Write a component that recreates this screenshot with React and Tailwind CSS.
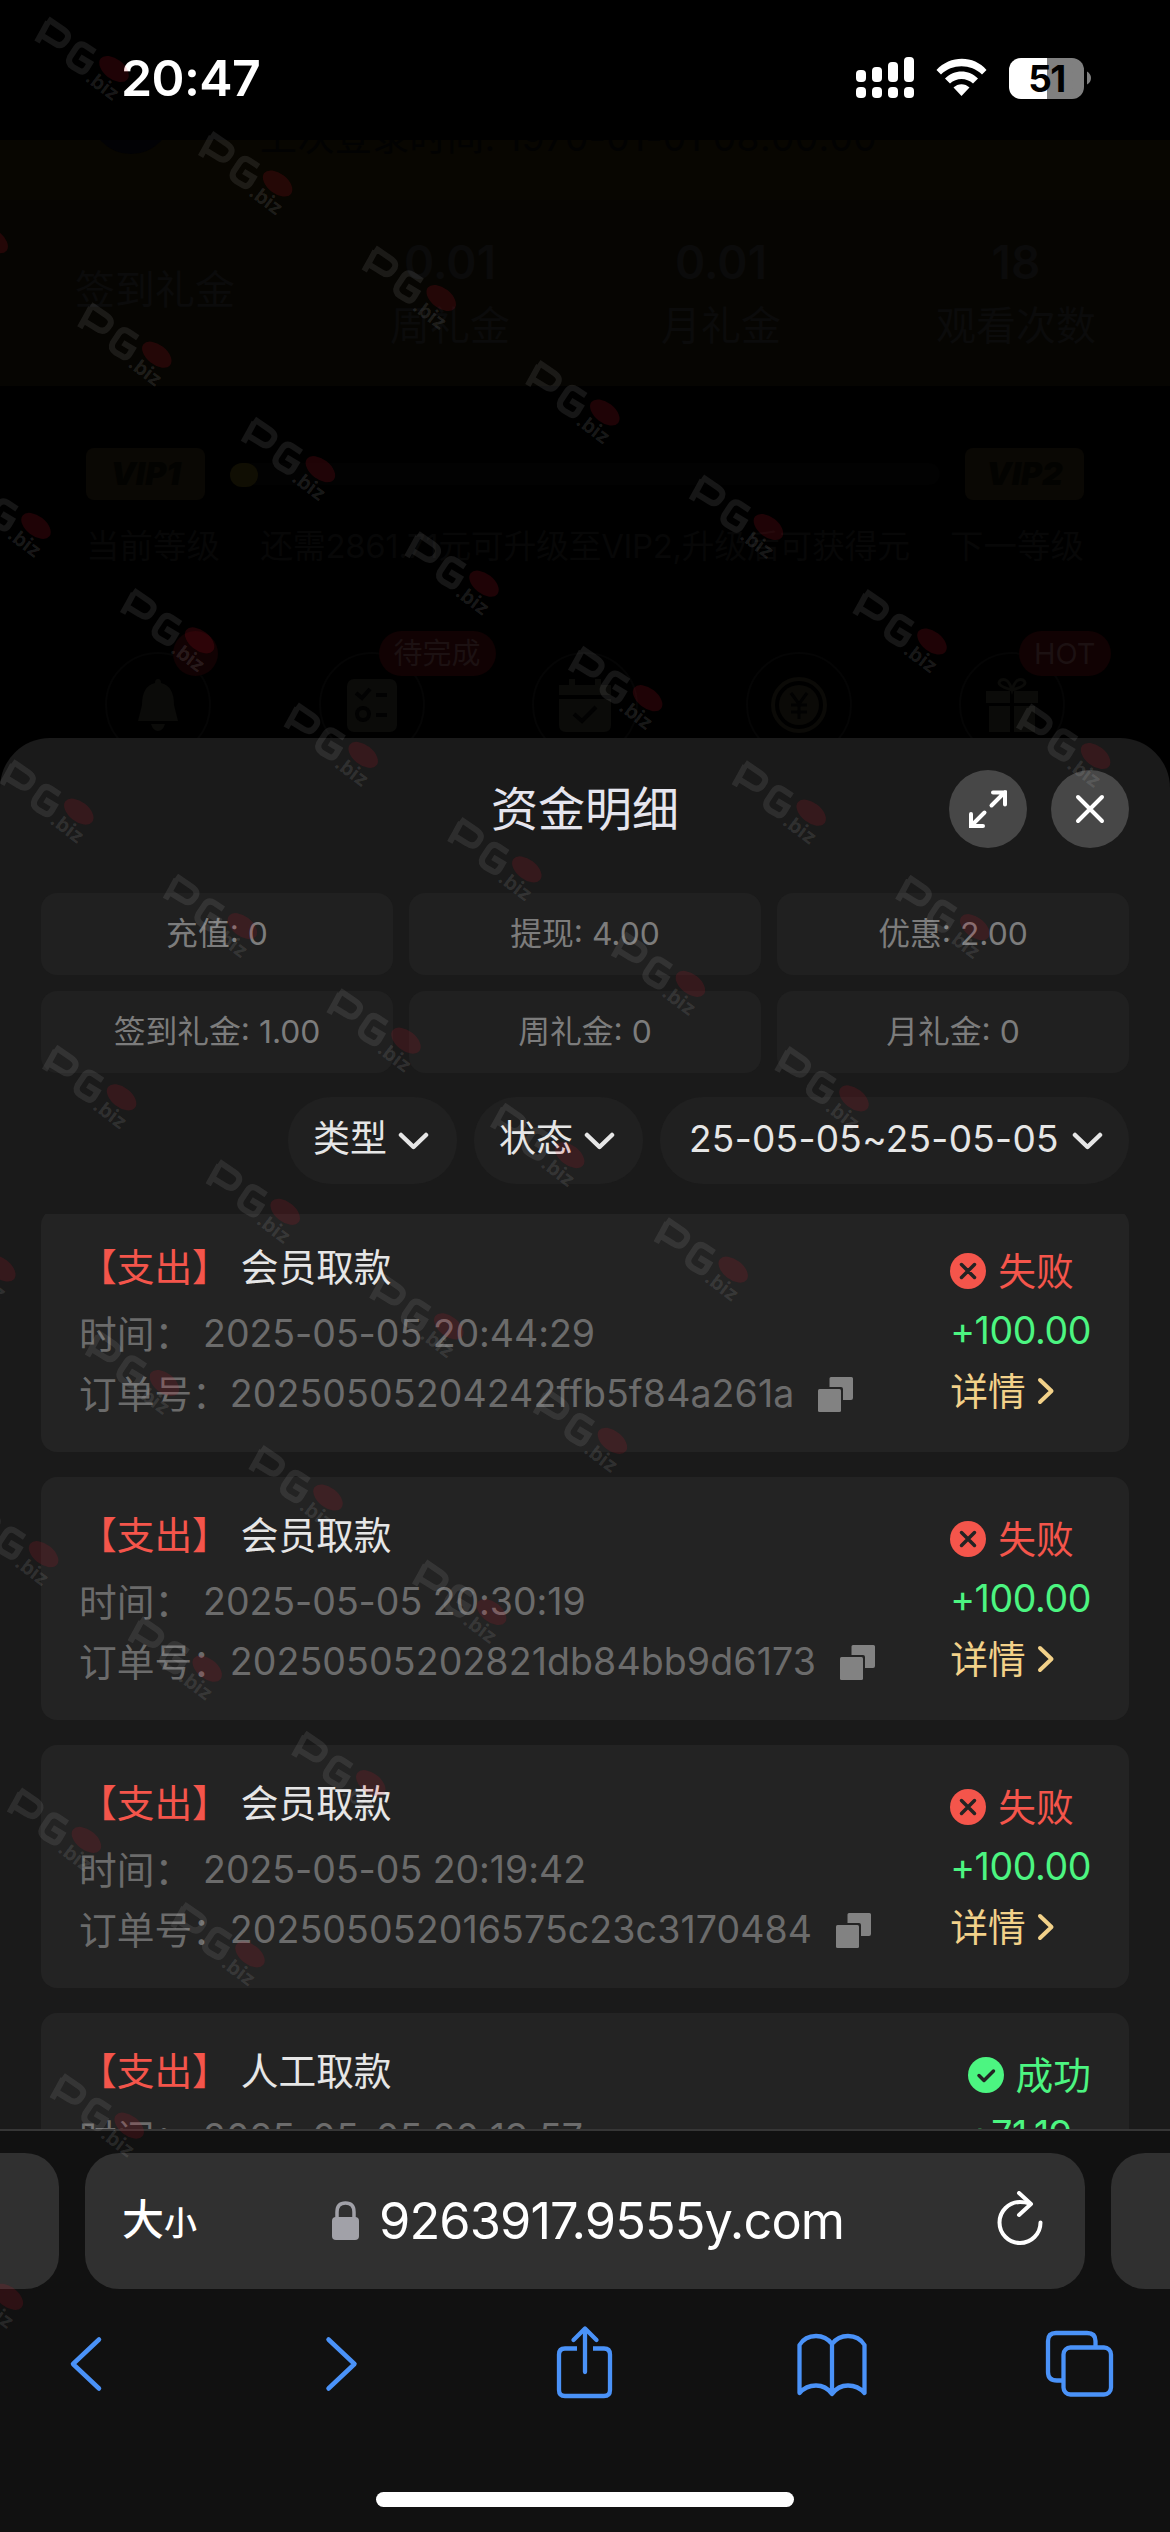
import { clsx } from "clsx";

const stats = [
  { label: "充值", value: "0" },
  { label: "提现", value: "4.00" },
  { label: "优惠", value: "2.00" },
  { label: "签到礼金", value: "1.00" },
  { label: "周礼金", value: "0" },
  { label: "月礼金", value: "0" },
];

const records = [
  {
    type: "会员取款",
    time: "2025-05-05 20:44:29",
    order: "20250505204242ffb5f84a261a",
    amount: "+100.00",
    success: false,
  },
  {
    type: "会员取款",
    time: "2025-05-05 20:30:19",
    order: "20250505202821db84bb9d6173",
    amount: "+100.00",
    success: false,
  },
  {
    type: "会员取款",
    time: "2025-05-05 20:19:42",
    order: "202505052016575c23c3170484",
    amount: "+100.00",
    success: false,
  },
  {
    type: "人工取款",
    time: "2025-05-05 20:19:57",
    order: "",
    amount: "+71.19",
    success: true,
  },
];

// Status bar
function StatusBar() {
  return (
    <header className="h-[140px] shrink-0 bg-black flex items-start justify-between pl-[121px] pr-[79px] text-white">
      <div className="mt-[48px] h-[60px] leading-[60px] text-[50px] font-semibold tracking-[-0.6px]">20:47</div>
      <div className="mt-[57px] flex items-center">
        <svg width="58" height="42" viewBox="0 0 58 42" fill="white">
          <rect x="0" y="13" width="10" height="12" rx="4" />
          <rect x="16" y="10" width="10" height="15" rx="4" />
          <rect x="32" y="5" width="10" height="20" rx="4" />
          <rect x="48" y="0" width="10" height="25" rx="4" />
          <rect x="0" y="30" width="10" height="11" rx="4" />
          <rect x="16" y="30" width="10" height="11" rx="4" />
          <rect x="32" y="30" width="10" height="11" rx="4" />
          <rect x="48" y="30" width="10" height="11" rx="4" />
        </svg>
        <svg className="ml-[22px]" width="52" height="42" viewBox="0 0 52 42" fill="white">
          <path d="M0.5 13 C14 -2 38 -2 50.5 13 L46 17.5 C35 6.500 16 6.500 5 17.500 Z" strokeLinejoin="round" />
          <path d="M9 21.500 C18 12 33 12 42 21.500 L37 26.500 C30.500 20.500 20.500 20.500 14 26.500 Z" />
          <path d="M17.500 30.500 C22 26 29 26 33.500 30.500 L25.500 39 Z" />
        </svg>
        <div className="ml-[21px] w-[75px] h-[41px] rounded-[12px] bg-gradient-to-r from-white from-[51%] to-[#808080] to-[51%] text-center leading-[41px] text-[37px] font-bold text-black tracking-[-1.5px]">
          51
        </div>
        <svg className="ml-[3px]" width="4" height="14" viewBox="0 0 4 14">
          <path d="M0 0.500 Q4 3 4 7 Q4 11 0 13.500 Z" fill="#808080" />
        </svg>
      </div>
    </header>
  );
}

function Medal({ label, badge, dot, children }) {
  return (
    <div className="relative w-[106px] h-[106px] rounded-full border-2 border-[#050505] flex items-center justify-center" aria-label={label}>
      <svg width="56" height="56" viewBox="0 0 56 56">{children}</svg>
      {badge && (
        <span className="absolute -top-[23px] left-[58px] h-[45px] px-[15px] rounded-full bg-[#110203] text-[#1c1112] text-[29px] leading-[45px] whitespace-nowrap">
          {badge}
        </span>
      )}
      {dot && <span className="absolute -top-[23px] left-[66px] w-[45px] h-[45px] rounded-full bg-[#110203]" />}
    </div>
  );
}

// Dimmed profile page behind the sheet
function Backdrop() {
  return (
    <section className="h-[598px] shrink-0 bg-black overflow-hidden">
      <div className="h-[60px] bg-[#080601] flex pl-[90px] overflow-hidden">
        <div className="-mt-[68px] w-[82px] h-[82px] rounded-full bg-[#020205]" />
        <div className="-mt-[24px] ml-[88px] h-[44px] leading-[44px] text-[37px] text-[#020202] tracking-[0.4px]">
          上次登录时间: 1970-01-01 08:00:00
        </div>
      </div>
      <div className="h-[186px] bg-[#060502] flex justify-between pl-[75px] pr-[74px] text-[#0b0b0b] text-[40px] leading-[58px] text-center">
        <div className="pt-[61px]">签到礼金</div>
        <div className="pt-[33px] -mr-1">
          <div className="text-[46px] font-semibold">0.01</div>
          <div className="pt-[6px]">周礼金</div>
        </div>
        <div className="pt-[33px]">
          <div className="text-[46px] font-semibold">0.01</div>
          <div className="pt-[6px]">月礼金</div>
        </div>
        <div className="pt-[33px]">
          <div className="text-[46px] font-semibold">18</div>
          <div className="pt-[6px]">观看次数</div>
        </div>
      </div>
      <div className="mt-[62px] px-[86px] flex items-center justify-between text-[32px] font-black italic text-[#030301]">
        <div className="w-[119px] h-[52px] rounded-lg bg-[#0a0804] text-center leading-[52px]">VIP1</div>
        <div className="w-[710px] h-[22px] rounded-full bg-[#020202]">
          <div className="w-[28px] h-[24px] rounded-full bg-[#100e03]" />
        </div>
        <div className="w-[119px] h-[52px] rounded-lg bg-[#0a0804] text-center leading-[52px]">VIP2</div>
      </div>
      <div className="mt-[24px] px-[86px] h-[44px] flex justify-between text-[33.5px] leading-[44px] text-[#070707] whitespace-nowrap">
        <span>当前等级</span>
        <span className="text-[33px] tracking-[-0.4px]">还需2861.71元可升级至VIP2,升级后可获得元</span>
        <span>下一等级</span>
      </div>
      <div className="mt-[84px] px-[105px] flex justify-between">
        <Medal label="bell" dot>
          <path d="M28 2 Q31 2 31 6 Q44 9 44 28 L48 44 H8 L12 28 Q12 9 25 6 Q25 2 28 2 Z M21 47 H35 Q33 54 28 54 Q23 54 21 47 Z" fill="#0b0b09" />
        </Medal>
        <Medal label="tasks" badge="待完成">
          <rect x="3" y="2" width="50" height="53" rx="7" fill="#0b0b09" />
          <path d="M12 16 L18 21 L26 12 M32 18 H43 M32 38 H43" stroke="#020202" strokeWidth="4" fill="none" />
          <circle cx="19" cy="37" r="6" stroke="#020202" strokeWidth="4" fill="none" />
        </Medal>
        <Medal label="calendar">
          <path d="M2 8 H54 V18 H2 Z M2 22 H54 V48 Q54 55 47 55 H9 Q2 55 2 48 Z M12 2 H18 V8 H12 Z M38 2 H44 V8 H38 Z" fill="#0b0b09" />
          <path d="M17 37 L25 44 L39 30" stroke="#020202" strokeWidth="4" fill="none" />
        </Medal>
        <Medal label="coin">
          <circle cx="28" cy="28" r="26" stroke="#0b0a07" strokeWidth="4" fill="none" />
          <circle cx="28" cy="28" r="20" fill="#0b0a07" />
          <path d="M20 16 L28 27 L36 16 M28 27 V42 M20 28 H36 M20 35 H36" stroke="#020202" strokeWidth="3" fill="none" />
        </Medal>
        <Medal label="gift" badge="HOT">
          <path d="M2 14 H26 V26 H2 Z M30 14 H54 V26 H30 Z M5 29 H26 V55 H5 Z M30 29 H51 V55 H30 Z" fill="#0b0b09" />
          <path d="M28 13 Q10 8 17 3 Q24 0 28 13 Q32 0 39 3 Q46 8 28 13" stroke="#0b0b09" strokeWidth="3" fill="none" />
        </Medal>
      </div>
    </section>
  );
}

function Chevron() {
  return (
    <svg width="31" height="18" viewBox="0 0 31 18" fill="none">
      <path d="M3 3 L15.500 15 L28 3" stroke="#e6e6e6" strokeWidth="4.500" strokeLinecap="round" strokeLinejoin="round" />
    </svg>
  );
}

function Filter({ text, className }) {
  return (
    <button className={clsx("h-[87px] rounded-[43px] bg-[#202020] flex items-center justify-between text-[37px] text-[#e6e6e6] whitespace-nowrap", className)}>
      <span className="-mt-[4px]">{text}</span>
      <Chevron />
    </button>
  );
}

function StatusIcon({ success }) {
  return (
    <svg width="36" height="36" viewBox="0 0 36 36" fill="none">
      <circle cx="18" cy="18" r="18" fill={success ? "#4cf581" : "#f4554b"} />
      {success ? (
        <path d="M11 18.500 L16 23.500 L25.500 14" stroke="#232323" strokeWidth="3.500" strokeLinecap="round" strokeLinejoin="round" />
      ) : (
        <path d="M11.500 11.500 L24.500 24.500 M24.500 11.500 L11.500 24.500" stroke="#232323" strokeWidth="3.500" strokeLinecap="round" />
      )}
    </svg>
  );
}

function RecordCard({ record }) {
  return (
    <article className="h-[243px] shrink-0 rounded-[16px] bg-[#232323] flex justify-between pl-[38px] pr-[38px] text-[37.7px] leading-[60px] whitespace-nowrap">
      {/* Left side */}
      <div className="pt-[28px] text-[#6b6b6b]">
        <div className="flex">
          <span className="text-[#f4554b]">【支出】</span>
          <span className="ml-[11px] text-[#e6e6e6]">{record.type}</span>
        </div>
        <div className="mt-[7px] flex">
          <span>时间：</span>
          <span className="ml-[11px] text-[37.5px] tracking-[-0.05px]">{record.time}</span>
        </div>
        {record.order && (
          <div className="flex items-center">
            <span>订单号：</span>
            <span className="text-[37.5px] tracking-[0.1px]">{record.order}</span>
            <svg className="ml-[24px]" width="35" height="35" viewBox="0 0 35 35" fill="#828282">
              <path d="M13 0 H33.500 Q35 0 35 1.500 V21 Q35 23 33 23 H25 V12 Q25 10 23 10 H11.500 V1.500 Q11.500 0 13 0 Z" />
              <rect x="0" y="12" width="23" height="23" rx="1.500" />
            </svg>
          </div>
        )}
      </div>
      {/* Right side */}
      <div className="pt-[32px]">
        <div className={clsx("flex items-center gap-[12px]", record.success ? "text-[#4cf581]" : "text-[#f4554b]")}>
          <StatusIcon success={record.success} />
          <span>{record.success ? "成功" : "失败"}</span>
        </div>
        <div className="text-[37.5px] text-[#4cf581] tracking-[-0.4px]">{record.amount}</div>
        <div className="flex items-center text-[#f2d189]">
          <span>详情</span>
          <svg className="ml-[11px]" width="18" height="28" viewBox="0 0 18 28" fill="none">
            <path d="M3 3 L14.500 14 L3 25" stroke="#f2d189" strokeWidth="4" strokeLinecap="round" strokeLinejoin="round" />
          </svg>
        </div>
      </div>
    </article>
  );
}

function Sheet() {
  return (
    <main className="h-[1391px] shrink-0 bg-black">
      <div className="h-full rounded-t-[50px] bg-[#1a1a1a] px-[41px] flex flex-col">
        {/* Title row */}
        <div className="h-[142px] shrink-0 grid grid-cols-[1fr_auto_1fr] items-center text-[#e5e5ee]">
          <span />
          <h1 className="text-[47px] leading-[60px]">资金明细</h1>
          <div className="flex justify-end gap-[24px]">
            <button className="w-[78px] h-[78px] rounded-full bg-[#474747] flex items-center justify-center">
              <svg width="40" height="40" viewBox="0 0 40 40" fill="none" stroke="white" strokeWidth="4" strokeLinecap="round" strokeLinejoin="miter">
                <path d="M23.500 16.500 L37 3 M25 3.500 H37 V15.500" />
                <path d="M16.500 23.500 L3 37 M3 25 V37 H15" />
              </svg>
            </button>
            <button className="w-[78px] h-[78px] rounded-full bg-[#474747] flex items-center justify-center">
              <svg width="30" height="30" viewBox="0 0 30 30" fill="none" stroke="white" strokeWidth="4" strokeLinecap="round">
                <path d="M3 3 L27 27 M27 3 L3 27" />
              </svg>
            </button>
          </div>
        </div>

        {/* Stats */}
        <div className="mt-[13px] grid grid-cols-3 gap-4">
          {stats.map((s) => (
            <div key={s.label} className="h-[82px] rounded-[16px] bg-[#202020] flex items-center justify-center text-[31.8px] text-[#7c7c7c]">
              {s.label}: {s.value}
            </div>
          ))}
        </div>

        {/* Filters */}
        <div className="mt-[24px] flex justify-end gap-[17px]">
          <Filter text="类型" className="w-[169px] pl-[25px] pr-[28px]" />
          <Filter text="状态" className="w-[169px] pl-[25px] pr-[28px]" />
          <Filter text="25-05-05~25-05-05" className="w-[469px] pl-[29px] pr-[26px] tracking-[0.3px]" />
        </div>

        {/* Records */}
        <div className="mt-[30px] flex-1 min-h-0 overflow-hidden rounded-t-[4px]">
          <div className="-mt-[5px] flex flex-col gap-[25px]">
            {records.map((r) => (
              <RecordCard key={r.time} record={r} />
            ))}
          </div>
        </div>
      </div>
    </main>
  );
}

function SafariBar() {
  return (
    <footer className="h-[403px] shrink-0 border-t-2 border-[#363636] bg-[#111111] flex flex-col">
      <div className="mt-[22px] flex justify-between">
        <div className="w-[59px] h-[136px] rounded-r-[34px] bg-[#303030]" />
        <div className="w-[1000px] h-[136px] rounded-[34px] bg-[#303030] flex items-center text-white">
          <div className="ml-[37px] w-[80px] flex items-baseline font-medium leading-[60px]">
            <span className="text-[42px]">大</span>
            <span className="text-[33px]">小</span>
          </div>
          <svg className="ml-[130px]" width="28" height="40" viewBox="0 0 28 40">
            <rect x="0" y="16" width="27" height="23" rx="4" fill="#a1a1a8" />
            <path d="M5 18 V11 Q5 2 13.500 2 Q22 2 22 11 V18" fill="none" stroke="#a1a1a8" strokeWidth="3.500" />
          </svg>
          <div className="ml-[19px] w-[470px] text-[50.5px] leading-[60px] tracking-[-0.9px]">9263917.9555y.com</div>
          <svg className="ml-[148px] mb-[4px]" width="47" height="56" viewBox="0 0 47 56" fill="none" stroke="white" strokeWidth="4" strokeLinecap="round">
            <path d="M33 12.500 Q28 11 23 11 A20.500 20.500 0 1 0 43.500 31.500" />
            <path d="M22 2 L34 13 L22 24" strokeLinejoin="round" />
          </svg>
        </div>
        <div className="w-[59px] h-[136px] rounded-l-[34px] bg-[#303030]" />
      </div>

      {/* Toolbar icons */}
      <div className="mt-[36px] pl-[51px] pr-[55px] flex justify-between">
        <svg width="70" height="80" viewBox="0 0 70 80" fill="none" stroke="#4a92f8" strokeWidth="4.500" strokeLinecap="round" strokeLinejoin="round">
          <path d="M48 14.500 L22 39 L48 63.500" />
        </svg>
        <svg width="70" height="80" viewBox="0 0 70 80" fill="none" stroke="#4a92f8" strokeWidth="4.500" strokeLinecap="round" strokeLinejoin="round">
          <path d="M28.500 14.500 L54.500 39 L28.500 63.500" />
        </svg>
        <svg width="70" height="80" viewBox="0 0 70 80" fill="none" stroke="#4a92f8" strokeWidth="4.300" strokeLinecap="round" strokeLinejoin="round">
          <path d="M29 23.500 H17 Q11 23.500 11 29.500 V65 Q11 71 17 71 H56 Q62 71 62 65 V29.500 Q62 23.500 56 23.500 H45" strokeLinecap="butt" />
          <path d="M37 47 V4 M25.500 15 L37 3.500 L48.500 15" />
        </svg>
        <svg width="70" height="80" viewBox="0 0 70 80" fill="none" stroke="#4a92f8" strokeWidth="4.300" strokeLinecap="round" strokeLinejoin="round">
          <path d="M35 19 Q29 11 19 11 Q8 11 2.500 20 V68 Q9 60.500 19 60.500 Q29 60.500 35 69 Q41 60.500 51 60.500 Q61 60.500 67.500 68 V20 Q62 11 51 11 Q41 11 35 19 V68" />
        </svg>
        <svg width="70" height="80" viewBox="0 0 70 80" fill="none" stroke="#4a92f8" strokeWidth="4.300">
          <rect x="18.500" y="22.500" width="47.500" height="47" rx="7" />
          <path d="M18.500 55.500 H12 Q3 55.500 3 47 V16 Q3 8 11 8 H42 Q50.500 8 50.500 16 V22" />
        </svg>
      </div>

      <div className="mt-[87px] mx-auto w-[418px] h-[15px] rounded-full bg-white" />
    </footer>
  );
}

// Rows of marks run diagonally, each row one mark shorter than the last
const marks = [];
for (let row = 0; row < 10; row++) {
  for (let i = -3; i <= 6 - row; i++) {
    const x = 34 + i * 163.6 + row * 42.8;
    const y = 20 + i * 114.5 + row * 285.7;
    if (x > -110) marks.push({ x, y });
  }
}

function Watermark() {
  return (
    <svg className="absolute inset-0 pointer-events-none" width="1170" height="2532" viewBox="0 0 1170 2532">
      {marks.map((m, i) => (
        <g key={i} transform={`translate(${m.x} ${m.y})`} fill="none" stroke="white" strokeOpacity="0.085" strokeWidth="6">
          <path d="M3 22 L8 13 M14 -1 L30 10 Q37 15 32 21 Q27 28 20 23 L7 15 L14 2" />
          <path d="M61 32 L52 26 Q46 22 42 28 L36 37 Q33 43 39 47 L46 51 Q50 53 53 48 L56 43 L46 37" />
          <ellipse cx="80" cy="49" rx="17" ry="10" transform="rotate(38 80 49)" fill="#dc1428" fillOpacity="0.14" stroke="none" />
          <text transform="translate(50 60) rotate(37)" fill="white" fillOpacity="0.11" stroke="none" fontSize="20" fontWeight="700">
            .biz
          </text>
        </g>
      ))}
    </svg>
  );
}

export default function App() {
  return (
    <div className="relative w-[1170px] h-[2532px] overflow-hidden bg-black flex flex-col font-[Inter,'Noto_Sans_CJK_SC',sans-serif]">
      <StatusBar />
      <Backdrop />
      <Sheet />
      <SafariBar />
      <Watermark />
    </div>
  );
}
